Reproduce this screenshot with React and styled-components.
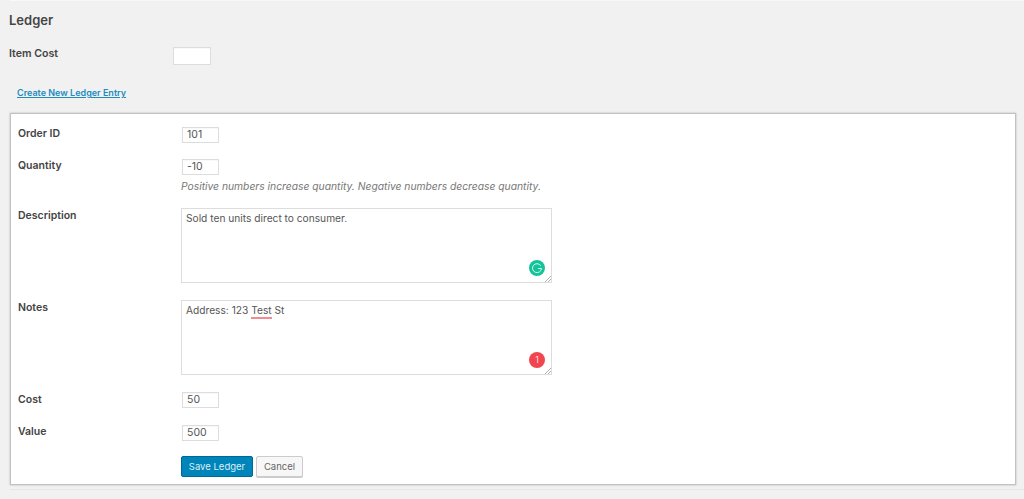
import styled, { createGlobalStyle } from "styled-components"

const GlobalStyle = createGlobalStyle`
  html, body {
    margin: 0;
    padding: 0;
    background: #f1f1f1;
  }
  body {
    font-family: Inter, "Liberation Sans", sans-serif;
    color: #444;
    -webkit-font-smoothing: antialiased;
  }
`

const Page = styled.div`
  width: 1024px;
  height: 499px;
  overflow: hidden;
  box-sizing: border-box;
  padding-left: 10px;
`

const Content = styled.div`
  box-sizing: border-box;
  height: 490px;
  padding-top: 12px;
  border-top: 1px solid #f8f8f8;
  border-bottom: 1px solid #e6e6e6;
`

const Title = styled.h2`
  margin: 0 0 0 -1px;
  font-size: 13px;
  line-height: 15px;
  font-weight: 600;
  color: #454545;
`

const ItemRow = styled.div`
  display: flex;
  align-items: flex-start;
  margin-top: 19px;
`

const ItemLabel = styled.label`
  width: 164px;
  margin-left: -1px;
  font-size: 10.6px;
  line-height: 14px;
  font-weight: 600;
  color: #444;
`

const Field = styled.div`
  box-sizing: border-box;
  width: ${(p) => p.$width}px;
  height: ${(p) => p.$height}px;
  margin-left: ${(p) => p.$left || 0}px;
  padding-left: 4px;
  background: #fff;
  border: 1px solid #ddd;
  box-shadow: inset 0 1px 1px rgba(0, 0, 0, 0.03);
  font-size: 10.5px;
  line-height: 14px;
  color: #555;
`

const CreateLink = styled.a`
  display: block;
  margin: 22px 0 0 7px;
  font-size: 9px;
  line-height: 12px;
  font-weight: 600;
  color: #1e8cbe;
  text-decoration: underline;
`

const Panel = styled.div`
  box-sizing: border-box;
  width: 1006px;
  height: 372px;
  margin-top: 14px;
  padding: 13px 7px 0 7px;
  background: #fff;
  border: 1px solid #c2c2c2;
  box-shadow: 0 0 2px rgba(0, 0, 0, 0.25);
`

const Row = styled.div`
  display: grid;
  grid-template-columns: 163px 1fr;
  margin-bottom: ${(p) => p.$gap}px;
`

const Label = styled.label`
  margin-top: ${(p) => p.$top || 0}px;
  font-size: 10.5px;
  line-height: 14px;
  font-weight: 600;
  color: #444;
`

const Hint = styled.p`
  margin: 5px 0 0;
  font-size: 10.3px;
  line-height: 13px;
  font-style: italic;
  color: #777;
`

const TextBox = styled.div`
  position: relative;
  box-sizing: border-box;
  width: 371px;
  height: 75px;
  padding: 2px 4px;
  background: #fff;
  border: 1px solid #ddd;
  font-size: 10.2px;
  line-height: 15px;
  color: #555;
`

const Misspelled = styled.span`
  display: inline-block;
  line-height: 13px;
  border-bottom: 2px solid #f48a90;
`

const Badge = styled.div`
  position: absolute;
  right: 6px;
  bottom: 6px;
  width: 16px;
  height: 16px;
  border-radius: 50%;
  display: flex;
  align-items: center;
  justify-content: center;
  background: ${(p) => p.$color};
  color: #fff;
  font-size: 9px;
  font-weight: 300;
  line-height: 16px;
`

const Grip = styled.svg`
  position: absolute;
  right: 0;
  bottom: 0;
  width: 7px;
  height: 7px;
`

const Actions = styled.div`
  display: flex;
  gap: 3px;
  margin-left: 163px;
`

const SaveButton = styled.button`
  box-sizing: border-box;
  width: 72px;
  height: 21px;
  padding: 0;
  background: #0085ba;
  border: 1px solid #006799;
  border-radius: 2px;
  color: #dcedf4;
  font-family: inherit;
  font-size: 9.5px;
`

const CancelButton = styled.button`
  box-sizing: border-box;
  width: 47px;
  height: 21px;
  padding: 0;
  background: #f7f7f7;
  border: 1px solid #ccc;
  border-radius: 2px;
  box-shadow: 0 1px 0 #ccc;
  color: #666;
  font-family: inherit;
  font-size: 9.5px;
`

const ResizeGrip = () => (
  <Grip viewBox="0 0 7 7">
    <path d="M1 7 L7 1 M4 7 L7 4" stroke="#999" strokeWidth="0.8" fill="none" />
  </Grip>
)

// circular arrow, open on the upper right
const GrammarlyIcon = () => (
  <svg width="12" height="12" viewBox="0 0 12 12" fill="none">
    <path
      d="M9.6 3.4 A4.5 4.5 0 1 0 10.5 6.5 H7.5"
      stroke="#dff7f1"
      strokeWidth="1"
      strokeLinecap="round"
    />
  </svg>
)

export default function App() {
  return (
    <Page>
      <GlobalStyle />
      <Content>
        <Title>Ledger</Title>
        <ItemRow>
          <ItemLabel>Item Cost</ItemLabel>
          <Field $width={38} $height={18} />
        </ItemRow>
        <CreateLink href="#">Create New Ledger Entry</CreateLink>
        <Panel>
          <Row $gap={16}>
            <Label>Order ID</Label>
            <Field $width={37} $height={16} $left={1}>101</Field>
          </Row>
          <Row $gap={15}>
            <Label>Quantity</Label>
            <div>
              <Field $width={37} $height={16} $left={1}>-10</Field>
              <Hint>Positive numbers increase quantity. Negative numbers decrease quantity.</Hint>
            </div>
          </Row>
          <Row $gap={17}>
            <Label $top={1}>Description</Label>
            <TextBox>
              Sold ten units direct to consumer.
              <Badge $color="#15c39a"><GrammarlyIcon /></Badge>
              <ResizeGrip />
            </TextBox>
          </Row>
          <Row $gap={17}>
            <Label $top={1}>Notes</Label>
            <TextBox>
              Address: 123 <Misspelled>Test</Misspelled> St
              <Badge $color="#f1454f">1</Badge>
              <ResizeGrip />
            </TextBox>
          </Row>
          <Row $gap={17}>
            <Label $top={1}>Cost</Label>
            <Field $width={37} $height={16} $left={1}>50</Field>
          </Row>
          <Row $gap={15}>
            <Label>Value</Label>
            <Field $width={37} $height={16} $left={1}>500</Field>
          </Row>
          <Actions>
            <SaveButton>Save Ledger</SaveButton>
            <CancelButton>Cancel</CancelButton>
          </Actions>
        </Panel>
      </Content>
    </Page>
  )
}
